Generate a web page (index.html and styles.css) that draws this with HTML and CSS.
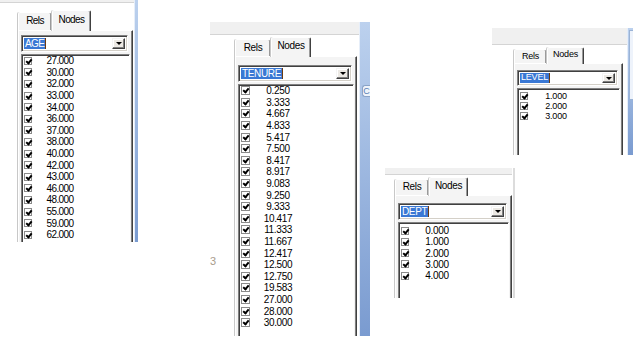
FILE: index.html
```html
<!DOCTYPE html>
<html lang="en">
<head>
    <meta charset="UTF-8">
    <title>Nodes filter</title>
    <link rel="stylesheet" href="styles.css">
</head>
<body>
    <!-- AGE -->
    <div class="shot shot-age">
        <div class="frame">
            <div class="band"></div>
            <div class="tabctl">
                <div class="tabs"><span class="tab">Rels</span><span class="tab active">Nodes</span></div>
                <div class="pane">
                    <div class="combo"><span class="combo-text"><span class="sel">AGE</span></span><span class="combo-btn"></span></div>
                    <ul class="list">
                        <li><i class="chk"></i><span class="val">27.000</span></li>
                        <li><i class="chk"></i><span class="val">30.000</span></li>
                        <li><i class="chk"></i><span class="val">32.000</span></li>
                        <li><i class="chk"></i><span class="val">33.000</span></li>
                        <li><i class="chk"></i><span class="val">34.000</span></li>
                        <li><i class="chk"></i><span class="val">36.000</span></li>
                        <li><i class="chk"></i><span class="val">37.000</span></li>
                        <li><i class="chk"></i><span class="val">38.000</span></li>
                        <li><i class="chk"></i><span class="val">40.000</span></li>
                        <li><i class="chk"></i><span class="val">42.000</span></li>
                        <li><i class="chk"></i><span class="val">43.000</span></li>
                        <li><i class="chk"></i><span class="val">46.000</span></li>
                        <li><i class="chk"></i><span class="val">48.000</span></li>
                        <li><i class="chk"></i><span class="val">55.000</span></li>
                        <li><i class="chk"></i><span class="val">59.000</span></li>
                        <li><i class="chk"></i><span class="val">62.000</span></li>
                    </ul>
                </div>
            </div>
        </div>
        <div class="strip"></div>
    </div>

    <!-- TENURE -->
    <div class="shot shot-tenure">
        <div class="frame">
            <div class="band"></div>
            <div class="tabctl">
                <div class="tabs"><span class="tab">Rels</span><span class="tab active">Nodes</span></div>
                <div class="pane">
                    <div class="combo"><span class="combo-text"><span class="sel">TENURE</span></span><span class="combo-btn"></span></div>
                    <ul class="list">
                        <li><i class="chk"></i><span class="val">0.250</span></li>
                        <li><i class="chk"></i><span class="val">3.333</span></li>
                        <li><i class="chk"></i><span class="val">4.667</span></li>
                        <li><i class="chk"></i><span class="val">4.833</span></li>
                        <li><i class="chk"></i><span class="val">5.417</span></li>
                        <li><i class="chk"></i><span class="val">7.500</span></li>
                        <li><i class="chk"></i><span class="val">8.417</span></li>
                        <li><i class="chk"></i><span class="val">8.917</span></li>
                        <li><i class="chk"></i><span class="val">9.083</span></li>
                        <li><i class="chk"></i><span class="val">9.250</span></li>
                        <li><i class="chk"></i><span class="val">9.333</span></li>
                        <li><i class="chk"></i><span class="val">10.417</span></li>
                        <li><i class="chk"></i><span class="val">11.333</span></li>
                        <li><i class="chk"></i><span class="val">11.667</span></li>
                        <li><i class="chk"></i><span class="val">12.417</span></li>
                        <li><i class="chk"></i><span class="val">12.500</span></li>
                        <li><i class="chk"></i><span class="val">12.750</span></li>
                        <li><i class="chk"></i><span class="val">19.583</span></li>
                        <li><i class="chk"></i><span class="val">27.000</span></li>
                        <li><i class="chk"></i><span class="val">28.000</span></li>
                        <li><i class="chk"></i><span class="val">30.000</span></li>
                    </ul>
                </div>
            </div>
        </div>
        <div class="strip"><span class="strip-btn">C</span></div>
    </div>

    <span class="stray">3</span>

    <!-- LEVEL -->
    <div class="shot shot-level">
        <div class="frame">
            <div class="band"></div>
            <div class="tabctl">
                <div class="tabs"><span class="tab">Rels</span><span class="tab active">Nodes</span></div>
                <div class="pane">
                    <div class="combo"><span class="combo-text"><span class="sel">LEVEL</span></span><span class="combo-btn"></span></div>
                    <ul class="list">
                        <li><i class="chk"></i><span class="val">1.000</span></li>
                        <li><i class="chk"></i><span class="val">2.000</span></li>
                        <li><i class="chk"></i><span class="val">3.000</span></li>
                    </ul>
                </div>
            </div>
        </div>
        <div class="strip"><span class="strip-pane"></span></div>
    </div>

    <!-- DEPT -->
    <div class="shot shot-dept">
        <div class="frame">
            <div class="band"></div>
            <div class="tabctl">
                <div class="tabs"><span class="tab">Rels</span><span class="tab active">Nodes</span></div>
                <div class="pane">
                    <div class="combo"><span class="combo-text"><span class="sel">DEPT</span></span><span class="combo-btn"></span></div>
                    <ul class="list">
                        <li><i class="chk"></i><span class="val">0.000</span></li>
                        <li><i class="chk"></i><span class="val">1.000</span></li>
                        <li><i class="chk"></i><span class="val">2.000</span></li>
                        <li><i class="chk"></i><span class="val">3.000</span></li>
                        <li><i class="chk"></i><span class="val">4.000</span></li>
                    </ul>
                </div>
            </div>
        </div>
        <div class="strip"></div>
    </div>
</body>
</html>
```

FILE: styles.css
```css
* {
    box-sizing: border-box;
}
body {
    margin: 0;
    width: 633px;
    height: 346px;
    position: relative;
    overflow: hidden;
    background: #fff;
    font-family: "Liberation Sans", Arial, sans-serif;
    color: #000;
}

/* one captured window piece */
.shot {
    position: absolute;
    display: flex;
    overflow: hidden;
    background: #fff;
    font-size: var(--fs);
    letter-spacing: var(--ls);
}
.frame {
    flex: 1;
    min-width: 0;
    display: flex;
    flex-direction: column;
}
.band {
    flex: none;
    height: var(--band);
    background: #f0f0f0;
    border-bottom: 1px solid #d4d4d4;
}
.tabctl {
    flex: 1;
    display: flex;
    flex-direction: column;
    padding: var(--pad-t) var(--pad-r) 0 var(--pad-l);
}
.tabs {
    flex: none;
    height: var(--tab-h);
    display: flex;
    align-items: flex-end;
}
.tab {
    width: var(--rels-w);
    height: calc(var(--tab-h) - 2px);
    display: flex;
    align-items: center;
    justify-content: center;
    padding-bottom: 2px;
    background: #f4f4f4;
    border: 1px solid;
    border-color: #fff #404040 transparent #fff;
    border-bottom: none;
    border-radius: 2px 2px 0 0;
    box-shadow: inset -1px 0 #9a9a9a, -1px 0 #c8c8c8;
}
.tab.active {
    width: var(--nodes-w);
    height: calc(var(--tab-h) + 1px);
    margin-bottom: -1px;
    padding-bottom: 4px;
    position: relative;
    z-index: 1;
}
.pane {
    flex: 1;
    margin-bottom: -8px;
    display: flex;
    flex-direction: column;
    padding: var(--combo-top) 2px 0 2px;
    background: #f4f4f4;
    border: 1px solid;
    border-color: #fff #404040 #404040 #fff;
    box-shadow: inset -1px -1px #808080, -1px 0 #c8c8c8;
}

/* combo box */
.combo {
    flex: none;
    height: var(--combo-h);
    margin-right: 2px;
    display: flex;
    align-items: stretch;
    padding: 2px;
    background: #fff;
    border: 1px solid;
    border-color: #808080 #fff #fff #808080;
    box-shadow: inset 1px 1px #404040, inset -1px -1px #d4d0c8;
}
.combo-text {
    flex: 1;
    display: flex;
    align-items: center;
}
.sel {
    background: #3a78d4;
    color: #fff;
    padding: 0 1px;
    line-height: 1.1;
    border-right: 1px solid #6a3a10;
}
.combo-btn {
    flex: none;
    width: 13px;
    display: flex;
    align-items: center;
    justify-content: center;
    background: #ece9e4;
    border: 1px solid;
    border-color: #f4f4f4 #404040 #404040 #f4f4f4;
    box-shadow: inset -1px -1px #808080, inset 1px 1px #fff;
}
.combo-btn::after {
    content: "";
    border-left: 3px solid transparent;
    border-right: 3px solid transparent;
    border-top: 3px solid #000;
}

/* checked list */
.list {
    flex: 1;
    margin: 2px 0 0;
    padding: var(--list-pt) 0 0 2px;
    list-style: none;
    background: #fff;
    border: 1px solid;
    border-color: #808080 #fff #fff #808080;
    box-shadow: inset 1px 1px #404040;
}
.list li {
    height: var(--row);
    display: flex;
    align-items: center;
}
.chk {
    flex: none;
    position: relative;
    width: var(--chk);
    height: var(--chk);
    background: #fff;
    border: 1px solid #8a8a8a;
}
.chk::after {
    content: "";
    position: absolute;
    left: 2px;
    top: 0;
    width: 2px;
    height: 4px;
    border: solid #000;
    border-width: 0 2px 2px 0;
    transform: rotate(40deg);
}
.val {
    width: 50px;
    margin-left: 3px;
    text-align: center;
}

/* neighbouring window edge */
.strip {
    flex: none;
    position: relative;
    width: var(--strip);
    background: linear-gradient(#bcd1ee, #7a9bd0);
    border-left: 1px solid #e6eef9;
}
.strip-btn {
    position: absolute;
    top: 63px;
    left: 2px;
    right: 0;
    height: 12px;
    font-size: 9px;
    line-height: 10px;
    letter-spacing: 0;
    text-align: center;
    color: #5a7fb5;
    background: #eef3fa;
    border: 1px solid #8aa3c8;
    border-right: none;
    border-radius: 3px 0 0 3px;
}
.strip-pane {
    position: absolute;
    top: 2px;
    left: 1px;
    right: 0;
    height: 70px;
    background: #eef3fb;
    border: 1px solid #9ab3d6;
    border-right: none;
}
.stray {
    position: absolute;
    left: 210px;
    top: 255px;
    font-size: 11px;
    color: #a89c8c;
}

/* per capture sizes */
.shot-age {
    left: 0;
    top: 0;
    width: 138px;
    height: 242px;
    --fs: 10px; --ls: -0.6px;
    --band: 3px; --strip: 4px;
    --pad-t: 7px; --pad-l: 18px; --pad-r: 1px;
    --tab-h: 20px; --rels-w: 34px; --nodes-w: 39px;
    --combo-top: 4px; --combo-h: 17px;
    --row: 11.6px; --list-pt: 0px; --chk: 8px;
}
.shot-tenure {
    left: 210px;
    top: 22px;
    width: 160px;
    height: 314px;
    --fs: 10px; --ls: -0.35px;
    --band: 13px; --strip: 11px;
    --pad-t: 2px; --pad-l: 25px; --pad-r: 2px;
    --tab-h: 19px; --rels-w: 36px; --nodes-w: 40px;
    --combo-top: 8px; --combo-h: 17px;
    --row: 11.6px; --list-pt: 0px; --chk: 9px;
}
.shot-level {
    left: 492px;
    top: 28px;
    width: 141px;
    height: 127px;
    --fs: 9px; --ls: -0.2px;
    --band: 17px; --strip: 6px;
    --pad-t: 2px; --pad-l: 22px; --pad-r: 4px;
    --tab-h: 16px; --rels-w: 33px; --nodes-w: 37px;
    --combo-top: 6px; --combo-h: 16px;
    --row: 10px; --list-pt: 2px; --chk: 8px;
}
.shot-dept {
    left: 385px;
    top: 168px;
    width: 130px;
    height: 130px;
    --fs: 10px; --ls: -0.35px;
    --band: 7px; --strip: 3px;
    --pad-t: 2px; --pad-l: 10px; --pad-r: 0px;
    --tab-h: 18px; --rels-w: 34px; --nodes-w: 39px;
    --combo-top: 7px; --combo-h: 17px;
    --row: 11.25px; --list-pt: 2px; --chk: 8px;
}
.shot-dept .strip {
    background: #dcdcdc;
    border-left: 1px solid #fff;
}
```
